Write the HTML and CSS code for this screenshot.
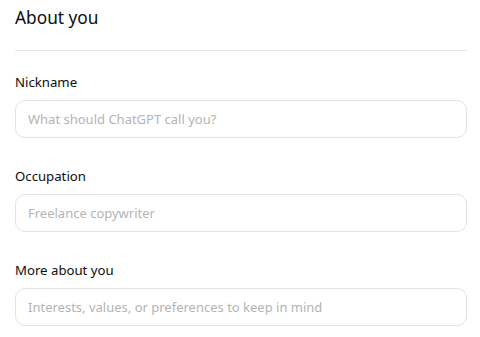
FILE: index.html
```html
<!DOCTYPE html>
<html>
<head>
    <meta charset="utf-8" />
    <title>About you</title>
    <link rel="stylesheet" href="styles.css">
</head>
<body>
    <div class="about">
        <h1 class="about-title">About you</h1>

        <div class="about-field">
            <label class="about-label" for="nickname">Nickname</label>
            <input class="about-input" id="nickname" type="text" placeholder="What should ChatGPT call you?" />
        </div>

        <div class="about-field">
            <label class="about-label" for="occupation">Occupation</label>
            <input class="about-input" id="occupation" type="text" placeholder="Freelance copywriter" />
        </div>

        <div class="about-field">
            <label class="about-label" for="more">More about you</label>
            <input class="about-input" id="more" type="text" placeholder="Interests, values, or preferences to keep in mind" />
        </div>
    </div>
</body>
</html>
```
FILE: styles.css
```css
body {
    margin: 0;
    padding: 0;
    background: #fff;
    font-family: "Noto Sans", "Open Sans", sans-serif;
    color: #0d0d0d;
}

.about {
    width: 452px;
    padding: 0 13px 0 15px;
    display: flex;
    flex-direction: column;
    gap: 28px;
}

.about-title {
    margin: 0;
    padding-bottom: 14px;
    border-bottom: 1px solid #e5e5e5;
    font-size: 17.3px;
    font-weight: normal;
    line-height: 36px;
    margin-bottom: -7px;
}

.about-field {
    display: flex;
    flex-direction: column;
    gap: 8px;
}

.about-label {
    font-size: 13.2px;
    line-height: 20px;
}

.about-input {
    box-sizing: border-box;
    width: 100%;
    height: 38px;
    margin: 0;
    padding: 0 12px;
    border: 1px solid #e3e3e3;
    border-radius: 10px;
    font-family: inherit;
    font-size: 13px;
    color: #0d0d0d;
    outline: none;
}

.about-input::placeholder {
    color: #b4b4b4;
}
```
